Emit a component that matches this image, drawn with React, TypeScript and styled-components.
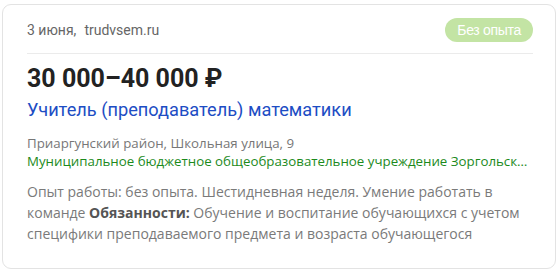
import React from "react";
import styled, { createGlobalStyle } from "styled-components";

const Global = createGlobalStyle`
  html, body { margin: 0; padding: 0; background: #ffffff; }
  body { font-family: "Open Sans", "Noto Sans", sans-serif; }
`;

const Page = styled.div`
  padding: 4px 3px 5px 2px;
`;

const Card = styled.article`
  box-sizing: border-box;
  width: 554px;
  height: 265px;
  border: 1px solid #e3e3e3;
  border-radius: 9px;
  padding: 12px 22px 0 24px;
  background: #fff;
`;

const Header = styled.div`
  display: flex;
  align-items: center;
  justify-content: space-between;
  padding: 1px 0 11px;
  border-bottom: 1px solid #ebebeb;
`;

const Meta = styled.div`
  font-family: Roboto, "Noto Sans", sans-serif;
  font-size: 14px;
  color: #666;
  display: flex;
  gap: 8px;
`;

const Badge = styled.span`
  font-family: "Liberation Sans", Arial, sans-serif;
  font-size: 14px;
  color: #fff;
  background: #c3e4a4;
  border-radius: 12px;
  height: 24px;
  line-height: 24px;
  padding: 0 12px;
  letter-spacing: -0.3px;
`;

const Salary = styled.div`
  font-family: Roboto, "Noto Sans", sans-serif;
  font-weight: 700;
  font-size: 25px;
  color: #222;
  margin-top: 11px;
  line-height: 28px;
`;

const Title = styled.a`
  display: block;
  font-family: Roboto, "Noto Sans", sans-serif;
  font-size: 18.2px;
  color: #1d4dc4;
  text-decoration: none;
  line-height: 24px;
  margin-top: 5px;
`;

const Address = styled.div`
  font-size: 13.3px;
  color: #777;
  line-height: 18px;
  margin-top: 12px;
`;

const Org = styled.div`
  font-size: 13.3px;
  color: #1c8a1c;
  line-height: 18px;
  white-space: nowrap;
  overflow: hidden;
  text-overflow: ellipsis;
`;

const Desc = styled.p`
  margin: 11px 0 0;
  font-size: 14px;
  color: #7a7a7a;
  line-height: 21px;
  max-width: 500px;

  b {
    color: #555;
    font-weight: 700;
  }
`;

export default function App() {
  return (
    <>
      <Global />
      <Page>
        <Card>
          <Header>
            <Meta>
              <span>3 июня,</span>
              <span>trudvsem.ru</span>
            </Meta>
            <Badge>Без опыта</Badge>
          </Header>
          <Salary>30 000–40 000 ₽</Salary>
          <Title href="#">Учитель (преподаватель) математики</Title>
          <Address>Приаргунский район, Школьная улица, 9</Address>
          <Org>Муниципальное бюджетное общеобразовательное учреждение Зоргольская средняя общеобразовательная школа</Org>
          <Desc>
            Опыт работы: без опыта. Шестидневная неделя. Умение работать в
            команде <b>Обязанности:</b> Обучение и воспитание обучающихся с учетом
            специфики преподаваемого предмета и возраста обучающегося
          </Desc>
        </Card>
      </Page>
    </>
  );
}
